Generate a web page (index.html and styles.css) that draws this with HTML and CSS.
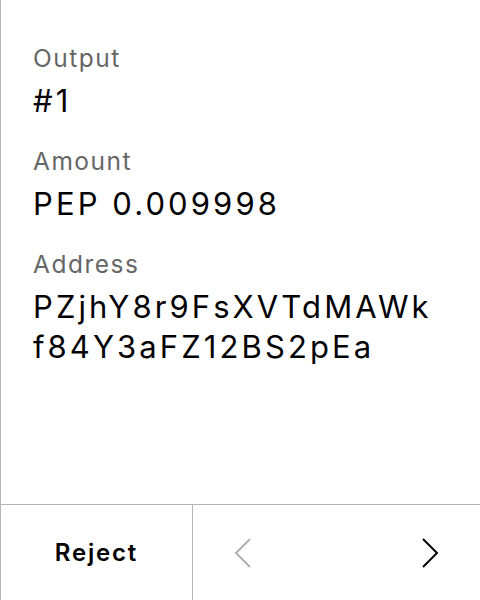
FILE: index.html
```html
<!DOCTYPE html>
<html>
<head>
<meta charset="utf-8">
<link rel="stylesheet" href="styles.css">
</head>
<body>
<div class="screen">
  <div class="content">
    <div class="field">
      <div class="label">Output</div>
      <div class="value">#1</div>
    </div>
    <div class="field">
      <div class="label">Amount</div>
      <div class="value">PEP 0.009998</div>
    </div>
    <div class="field">
      <div class="label">Address</div>
      <div class="value address">PZjhY8r9FsXVTdMAWkf84Y3aFZ12BS2pEa</div>
    </div>
  </div>
  <div class="actions">
    <div class="reject">Reject</div>
    <div class="nav">
      <svg class="chev prev" width="18" height="32" viewBox="0 0 18 32"><path d="M16 2 L2 16 L16 30" fill="none" stroke="currentColor" stroke-width="2"/></svg>
      <svg class="chev next" width="18" height="32" viewBox="0 0 18 32"><path d="M2 2 L16 16 L2 30" fill="none" stroke="currentColor" stroke-width="2"/></svg>
    </div>
  </div>
</div>
</body>
</html>
```
FILE: styles.css
```css
html, body {
  margin: 0;
  padding: 0;
  background: #fff;
}
.screen {
  width: 479px;
  height: 600px;
  border-left: 1px solid #b3b3b3;
  display: flex;
  flex-direction: column;
  font-family: Inter, "Liberation Sans", sans-serif;
  color: #000;
}
.content {
  flex: 1;
  padding: 42px 32px 0 32px;
  display: flex;
  flex-direction: column;
  gap: 24px;
}
.field {
  display: flex;
  flex-direction: column;
  gap: 7px;
}
.label {
  font-size: 24.5px;
  line-height: 32px;
  letter-spacing: 1.5px;
  color: #666;
}
.value {
  font-size: 31px;
  line-height: 40px;
  letter-spacing: 3.1px;
}
.address {
  width: 408px;
  word-break: break-all;
}
.actions {
  height: 95px;
  border-top: 1px solid #b3b3b3;
  display: flex;
}
.reject {
  width: 191px;
  border-right: 1px solid #b3b3b3;
  display: flex;
  align-items: center;
  justify-content: center;
  font-size: 24px;
  font-weight: 600;
  letter-spacing: 1.8px;
}
.nav {
  flex: 1;
  display: flex;
  align-items: center;
  justify-content: space-between;
  padding: 0 41px 0 41px;
}
.chev.prev { color: #b0b0b0; }
.chev.next { color: #000; }
```
